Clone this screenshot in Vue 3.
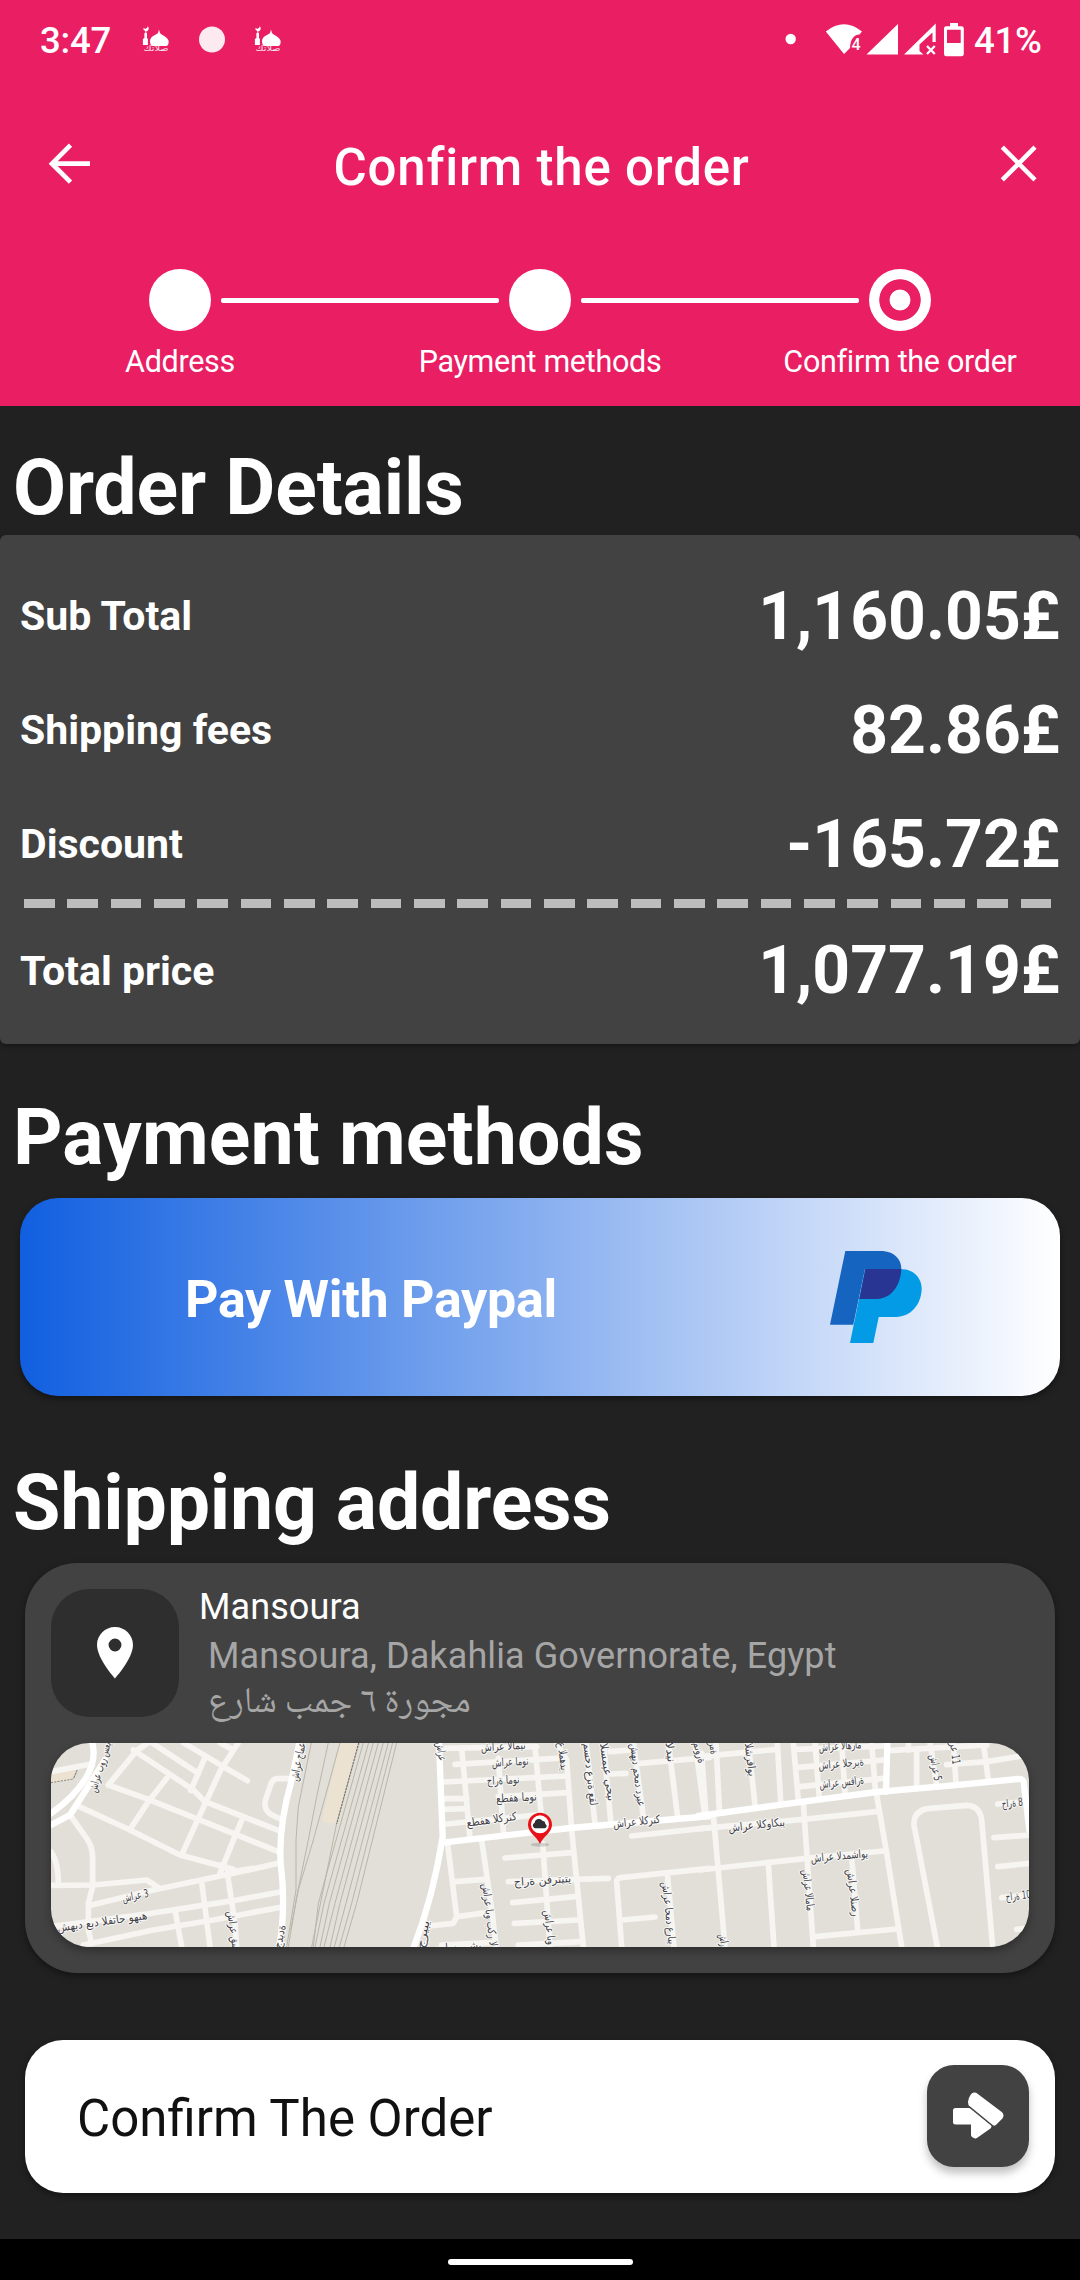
<script setup>
const steps = ['Address', 'Payment methods', 'Confirm the order']

const rows = [
  { label: 'Sub Total', value: '1,160.05£' },
  { label: 'Shipping fees', value: '82.86£' },
  { label: 'Discount', value: '-165.72£' },
]

// Map sectors share a local grid of 3 units per pixel; dx is the sector's offset in pixels.
const sectors = [
  {
    name: 'west',
    dx: -31,
    minor: [
      'M93 125 L210 103', 'M265 165 L350 62 L385 38', 'M340 60 L520 180 L555 215 L785 305',
      'M395 38 L535 130', 'M490 38 L610 110 L682 152', 'M600 38 L640 60',
      'M555 82 L512 182', 'M655 38 L602 120 L535 265 L485 375', 'M265 165 L385 208 L535 268 L775 365',
      'M440 145 L385 215 L330 298', 'M178 230 L330 300 L480 375 L640 418', 'M668 265 L645 318 L600 430',
      'M812 146 H775 Q755 146 750 170 L735 215 Q732 240 755 255 L785 268',
      'M150 255 L200 325 Q218 350 218 385 V470 L205 520 V600 L215 640', 'M93 365 Q115 395 115 465',
      'M93 466 L220 465 L380 450 L415 472', 'M215 525 L400 480 L640 430 L775 400', 'M600 405 L640 425 L700 415',
      'M93 590 L380 552 L640 512 L785 485', 'M190 645 L400 600 L580 570 L790 530',
      'M545 455 L570 651', 'M622 430 L645 580 L650 651', 'M465 540 L485 651',
    ],
    major: [
      'M217 38 Q230 90 200 140 Q165 200 93 250', 'M255 90 L150 255 L93 285',
      'M838 38 L815 150 Q775 290 782 400 Q795 500 785 600 L778 651',
    ],
    labels: [
      { t: 'شارع بور سعيد', x: 252, y: 110, r: -73, l: 165 },
      { t: 'شارع جامعة', x: 846, y: 92, r: -78, l: 130 },
      { t: 'شارع 3', x: 348, y: 508, r: -11, l: 80 },
      { t: 'شهيد عبد الفتاح وهبه', x: 248, y: 586, r: -8, l: 272 },
      { t: 'شارع قس', x: 630, y: 604, r: 82, l: 118 },
      { t: 'جديدة', x: 790, y: 622, r: -78, l: 70 },
    ],
  },
  {
    name: 'center',
    dx: 319,
    minor: [
      'M220 55 L500 50', 'M255 103 L560 85', 'M218 156 L590 138', 'M222 206 L290 206', 'M225 238 L290 236',
      'M228 282 L500 255', 'M385 200 L595 188', 'M275 55 L300 325', 'M385 85 L400 305', 'M495 50 L515 270',
      'M560 38 L590 90 L605 300 L640 651', 'M648 38 L675 280', 'M700 38 L722 270', 'M790 38 L820 260',
      'M895 38 L922 255', 'M975 38 L1003 245', 'M720 65 L785 60', 'M725 132 L768 130', 'M810 100 L1020 82',
      'M785 318 L1020 293', 'M232 335 L260 560 L250 580 L175 588', 'M255 455 L345 448', 'M262 560 L350 548',
      'M335 330 L368 560 L378 651', 'M518 340 L540 651', 'M405 384 L605 368', 'M415 455 L715 445',
      'M428 518 L615 500', 'M433 580 L625 570', 'M445 645 L635 635', 'M755 651 L740 455 Q740 442 760 442 L1020 415',
      'M755 570 L855 561', 'M892 430 L912 651', 'M215 645 L360 638',
    ],
    major: ['M207 38 L218 320 Q190 500 130 655', 'M218 338 L600 294 L1025 258'],
    labels: [
      { t: 'شارع', x: 203, y: 66, r: 82, l: 56 },
      { t: 'شارع الامين', x: 400, y: 60, r: -3, l: 134 },
      { t: 'شارع امون', x: 421, y: 107, r: -3, l: 110 },
      { t: 'حارة امون', x: 400, y: 162, r: -3, l: 98 },
      { t: 'عطفه امون', x: 440, y: 214, r: -3, l: 122 },
      { t: 'عطفه الكرنك', x: 366, y: 280, r: -8, l: 152 },
      { t: 'شارع الكرنك', x: 801, y: 286, r: -6, l: 142 },
      { t: 'حارة نفرتيتي', x: 518, y: 462, r: -4, l: 172 },
      { t: 'ع المهدي', x: 568, y: 80, r: 83, l: 84 },
      { t: 'مسجد عزبة عقل', x: 650, y: 134, r: 84, l: 188 },
      { t: 'السميع يحيى', x: 702, y: 128, r: 82, l: 175 },
      { t: 'شهيد محمد دريع', x: 792, y: 136, r: 83, l: 190 },
      { t: 'الدين', x: 890, y: 68, r: 83, l: 60 },
      { t: 'منورة', x: 978, y: 70, r: 75, l: 64 },
      { t: 'شارع ابو بكر ال', x: 348, y: 556, r: 83, l: 190 },
      { t: 'شارع ابو', x: 528, y: 594, r: 83, l: 104 },
      { t: 'شارع احمد عرابي', x: 886, y: 550, r: 84, l: 188 },
      { t: 'جريبي', x: 170, y: 615, r: -78, l: 84 },
      { t: 'ن اسر رشي', x: 265, y: 662, r: -4, l: 140 },
    ],
  },
  {
    name: 'east',
    dx: 649,
    minor: [
      'M0 80 L230 58', 'M5 70 L17 245', 'M48 38 L58 240', 'M145 38 L165 225', 'M232 38 L242 215',
      'M280 38 L295 212', 'M345 38 L358 205', 'M425 38 L435 190', 'M515 38 L527 190', 'M290 58 L555 48',
      'M295 112 L550 90', 'M300 170 L550 145', 'M565 62 L860 45', 'M650 60 V175', 'M690 38 L710 165',
      'M760 38 L768 160', 'M850 38 L865 150', 'M740 104 L860 95 L985 75', 'M625 38 V60', 'M0 296 L310 268 L530 245',
      'M0 420 L320 385 L550 363', 'M40 255 L75 651', 'M310 220 L340 651', 'M205 405 L222 651',
      'M530 195 L560 370 L605 651', 'M455 380 L473 600', 'M345 620 L590 597',
      'M712 651 L642 285 Q640 240 690 235 L800 226 Q840 228 845 270 L878 651',
      'M893 222 L985 215', 'M882 323 L990 315', 'M893 410 L990 400', 'M905 503 L990 495', 'M950 598 L990 594',
    ],
    major: ['M-5 258 L310 215 L530 186 L760 166 L955 147 Q972 145 972 165 L988 300', 'M562 38 L558 185'],
    labels: [
      { t: 'رمة', x: 30, y: 56, r: 80, l: 36 },
      { t: 'الشرقاوي', x: 140, y: 90, r: 83, l: 100 },
      { t: 'شارع الاهرام', x: 421, y: 59, r: -4, l: 128 },
      { t: 'شارع الحرية', x: 424, y: 112, r: -5, l: 136 },
      { t: 'شارع سقارة', x: 426, y: 168, r: -6, l: 134 },
      { t: 'شارع 5', x: 696, y: 115, r: 80, l: 80 },
      { t: 'رع 11', x: 754, y: 72, r: 83, l: 66 },
      { t: 'حارة 8', x: 938, y: 230, r: -6, l: 64 },
      { t: 'حارة 10', x: 956, y: 508, r: -7, l: 76 },
      { t: 'شارع الكواكبي', x: 171, y: 296, r: -6, l: 170 },
      { t: 'شارع الدمشاوي', x: 419, y: 389, r: -5, l: 172 },
      { t: 'شارع الامام', x: 314, y: 482, r: 84, l: 124 },
      { t: 'شارع النصر', x: 449, y: 490, r: 83, l: 142 },
      { t: 'شار', x: 60, y: 632, r: 80, l: 38 },
    ],
  },
]

const rails = [
  'M874 38 L835 230 L828 330 V480 L800 651', 'M925 38 L890 200 L865 330 L830 500 L805 651', 'M960 38 L880 330 L835 480 L812 600',
  'M1018 38 L950 280 L875 651', 'M1030 38 L895 520 L880 651', 'M1046 38 L912 520 L885 651', 'M1060 38 L928 520 L900 651',
  'M1075 38 L945 520 L912 651', 'M1090 38 L960 520 L930 651', 'M1105 38 L978 520 L943 651', 'M1118 38 L995 520 L958 651', 'M1130 38 L1010 520 L972 651',
]
</script>

<template>
  <div class="screen">
    <header class="header">
      <div class="status">
        <span class="time">3:47</span>
        <svg class="notifications" viewBox="140 0 150 80" width="150" height="80">
          <defs>
            <g id="mosque">
              <path d="M4.6 0.2 A2.7 2.7 0 1 1 0.4 1.8 A2.4 2.4 0 0 0 4.6 0.2Z M2.3 4 h1 v3 h-1z M1.4 7 h2.6 v5 l.9 1 v6 h-5 v-6 l1.500 -1z" fill="#fff" />
              <path d="M16 3.500 l.8 3 c1 2.500 7 3.500 8.700 8 c.7 3 -.8 5 -1.500 5.500 H8.500 C6.600 17 6.500 14 8 12 c2 -3 6.500 -3.500 7.200 -5.500z" fill="#fff" />
              <text x="0.500" y="24.500" textLength="25" lengthAdjust="spacingAndGlyphs" font-size="8" fill="#fff" font-family="DejaVu Sans, sans-serif" opacity=".9">صلاتك</text>
            </g>
          </defs>
          <use href="#mosque" x="143" y="25" />
          <circle cx="212" cy="38.500" r="13" fill="#fff" opacity=".9" />
          <use href="#mosque" x="255" y="25" />
        </svg>
        <svg class="indicators" viewBox="780 0 190 80" width="190" height="80">
          <g fill="#fff">
            <circle cx="790.700" cy="38" r="5.200" />
            <path d="M825.800 30.500 Q844 16 862 30.500 L859.500 33.500 Q850.500 34 850 47 L844 53Z" />
            <path d="M898 23 V53.500 H866.500Z" />
            <path fill-rule="evenodd" d="M935.700 22.500 V41 H932.500 V31.500 L919.500 43.500 V50 L923.500 53.500 H904Z" />
            <path fill-rule="evenodd" d="M950 22 h8 v3.200 h3.500 q2.300 0 2.300 2.300 V53 q0 2.200 -2.300 2.200 H946.300 q-2.300 0 -2.300 -2.200 V27.500 q0 -2.300 2.300 -2.300 H950Z M947 28.800 V42 H960.700 V28.800Z" />
          </g>
          <text x="851.500" y="48.500" font-size="16" font-weight="500" fill="#fff" font-family="Roboto, sans-serif">4</text>
          <path d="M927 45 L934.800 53 M934.800 45 L927 53" stroke="#fff" stroke-width="2.300" />
        </svg>
        <span class="battery">41%</span>
      </div>

      <div class="appbar">
        <svg viewBox="40 140 58 48" width="58" height="48">
          <path d="M90 163.700 H52 M70.500 145.200 L52 163.700 L70.500 182.200" fill="none" stroke="#fff" stroke-width="4.700" />
        </svg>
        <h1>Confirm the order</h1>
        <svg viewBox="992 140 52 48" width="52" height="48">
          <path d="M1002.300 147.200 L1035 179.900 M1035 147.200 L1002.300 179.900" stroke="#fff" stroke-width="4.500" />
        </svg>
      </div>

      <div class="track">
        <i class="node"></i><i class="line"></i><i class="node"></i><i class="line"></i><i class="node current"></i>
      </div>
      <div class="steps">
        <span v-for="s in steps" :key="s">{{ s }}</span>
      </div>
    </header>

    <main>
      <h2 class="details">Order Details</h2>
      <section class="summary">
        <div v-for="r in rows" :key="r.label" class="row">
          <span class="label">{{ r.label }}</span><span class="value">{{ r.value }}</span>
        </div>
        <div class="dashes"></div>
        <div class="row total">
          <span class="label">Total price</span><span class="value">1,077.19£</span>
        </div>
      </section>

      <h2 class="payment">Payment methods</h2>
      <button class="paypal">
        <span>Pay With Paypal</span>
        <svg viewBox="0 0 92 92" width="92" height="92">
          <path d="M15.300 0 H53 C65 1 72 9 71.300 19 L35 18 L23.300 73.700 H0Z" fill="#1565c0" />
          <path d="M35 18.300 H73 C84 19 91.700 27 91.700 38 C91 54 81 65.500 66 66 H48.700 L43.300 92 H20Z" fill="#039be5" />
          <path d="M35.300 18 H71.300 C70.500 35 61 47.500 47 48 H29.300Z" fill="#283593" />
        </svg>
      </button>

      <h2 class="ship">Shipping address</h2>
      <section class="address">
        <div class="place">
          <div class="pin">
            <svg viewBox="5 2 14 20" width="36" height="51.400">
              <path fill="#fff" d="M12 2C8.130 2 5 5.130 5 9c0 5.250 7 13 7 13s7-7.750 7-13c0-3.870-3.130-7-7-7zm0 9.500a2.500 2.500 0 1 1 0-5 2.500 2.500 0 0 1 0 5z" />
            </svg>
          </div>
          <div class="lines">
            <span class="city">Mansoura</span>
            <span class="region">Mansoura, Dakahlia Governorate, Egypt</span>
            <span class="street"><bdi dir="rtl">مجورة ٦ جمب شارع</bdi></span>
          </div>
        </div>
        <svg class="map" viewBox="0 0 978 204" width="978" height="204">
          <rect width="978" height="204" fill="#e1dfd7" />
          <g transform="translate(-31 -13) scale(.33333)" fill="none">
            <path d="M960 38 H1015 L950 282 L905 275Z" fill="#ebe2d1" />
            <path d="M93 133 L170 117 L160 147 L93 158Z" fill="#ebe2d1" />
            <path d="M93 158 L160 147 L172 117 M162 142 l10 -20" stroke="#77716a" stroke-width="2.500" stroke-dasharray="6 4" />
            <path v-for="d in rails" :key="d" :d="d" stroke="#b9b5aa" stroke-width="3" />
            <path d="M1016 38 L950 282" stroke="#6e6a63" stroke-width="3" stroke-dasharray="7 3" />
          </g>
          <g v-for="s in sectors" :key="s.name" :transform="`translate(${s.dx} -13) scale(.33333)`" fill="none" stroke-linejoin="round" stroke-linecap="round">
            <path v-for="d in s.minor" :key="d" :d="d" stroke="#f6f5f2" stroke-width="17" />
            <path v-for="d in s.major" :key="d" :d="d" stroke="#fff" stroke-width="19" />
          </g>
          <g v-for="s in sectors" :key="s.name + '-labels'" :transform="`translate(${s.dx} -13) scale(.33333)`">
            <text
              v-for="(l, i) in s.labels" :key="i" class="street-name" :textLength="l.l" lengthAdjust="spacingAndGlyphs"
              :transform="`translate(${l.x} ${l.y}) rotate(${l.r})`"
            >{{ l.t }}</text>
          </g>
          <g transform="translate(319 -13) scale(.33333)">
            <ellipse cx="510" cy="344" rx="28" ry="6" fill="#000" opacity=".15" />
            <path d="M510 342 C500 318 474 308 474 284 A36 36 0 0 1 546 284 C546 308 520 318 510 342Z" fill="#e80f17" />
            <circle cx="510" cy="283" r="27" fill="#fff" />
            <path d="M495 295 a9 9 0 0 1 -1 -17 a13 13 0 0 1 24 -5 q8 0 8 9 a7 7 0 0 1 -1 13Z" fill="#2e2e33" />
          </g>
        </svg>
      </section>

      <button class="confirm">
        <span>Confirm The Order</span>
        <i class="go">
          <svg viewBox="0 0 102 102" width="102" height="102">
            <g fill="#fff" stroke="#fff" stroke-linejoin="round">
              <path d="M47.500 32 L72 50.500 L66.500 56 L47 40.500 Q44 37 47.500 32Z" stroke-width="9" />
              <path d="M28.500 45.500 H42 L62 61.500 L48.500 71 L46.500 70 V57 H28.500Z" stroke-width="5" />
            </g>
            <path d="M42 41.500 L67 62" stroke="#424242" stroke-width="1.600" />
          </svg>
        </i>
      </button>
    </main>

    <footer class="nav"><i></i></footer>
  </div>
</template>

<style>
body { margin: 0; background: #212121; }
</style>

<style scoped>
* { box-sizing: border-box; }
.screen { width: 1080px; height: 2280px; display: flex; flex-direction: column; overflow: hidden; background: #212121; color: #fff; font-family: Roboto, "DejaVu Sans", sans-serif; }
h1, h2 { margin: 0; }
svg { display: block; flex: none; }
button { border: 0; font-family: inherit; text-align: left; }

.header { height: 406px; background: #ea1e63; }
.status { height: 81px; display: flex; align-items: center; padding: 0 37px 0 40px; font-size: 36.500px; font-weight: 500; line-height: 80px; }
.time { width: 100px; letter-spacing: -.2px; }
.indicators { margin-left: auto; }
.battery { width: 69px; margin-left: 4px; letter-spacing: -.3px; white-space: nowrap; }
.appbar { height: 171px; display: flex; align-items: center; justify-content: space-between; padding: 0 36px 0 40px; }
.appbar svg { margin-bottom: 5px; }
.appbar h1 { font-size: 51px; font-weight: 500; letter-spacing: .8px; white-space: nowrap; padding: 1px 7px 0 0; }
.track { display: flex; align-items: center; padding: 0 149px; margin-top: 17px; height: 62px; }
.node { width: 62px; height: 62px; border-radius: 50%; background: #fff; flex: none; }
.node.current { background: radial-gradient(circle, #fff 10px, #ea1e63 10.800px, #ea1e63 20.300px, #fff 21.100px); }
.line { flex: 1; height: 5px; margin: 0 10px; border-radius: 2px; background: #fff; }
.steps { display: grid; grid-template-columns: repeat(3, 360px); text-align: center; font-size: 30.500px; line-height: 40px; margin-top: 11px; letter-spacing: -.3px; }

main { flex: 1; display: flex; flex-direction: column; }
h2 { font-size: 77px; line-height: 95px; font-weight: 700; margin-left: 13px; white-space: nowrap; }
h2.details { margin-top: 35px; letter-spacing: -.1px; }
h2.payment { margin-top: 47px; letter-spacing: .1px; }
h2.ship { margin-top: 60px; letter-spacing: -.15px; }
.summary { height: 509px; margin-top: -1px; padding: 24px 20px 0; border-radius: 6px; background: #424242; box-shadow: 0 2px 5px rgba(0, 0, 0, .35); }
.row { height: 114px; display: flex; align-items: center; justify-content: space-between; font-weight: 700; }
.row.total { height: 125px; }
.label { font-size: 41px; }
.value { font-size: 66px; }
.dashes { height: 9px; width: 1028px; margin: -2px 0 0 4px; background: repeating-linear-gradient(90deg, #bdbdbd 0 30.800px, transparent 30.800px 43.330px); }

.paypal { height: 198px; margin: 12px 20px 0; padding: 0 138px 0 165px; display: flex; align-items: center; justify-content: space-between; border-radius: 38px; background: linear-gradient(90deg, #115fe0, #fff); color: #fff; font-size: 52px; font-weight: 700; letter-spacing: -.3px; box-shadow: 0 3px 6px rgba(0, 0, 0, .4); }
.paypal span { padding-top: 5px; }

.address { height: 410px; margin: 12px 25px 0; padding: 26px; border-radius: 52px; background: #424242; box-shadow: 0 3px 7px rgba(0, 0, 0, .4); }
.place { display: flex; height: 154px; }
.pin { width: 128px; height: 128px; border-radius: 38px; background: #2e2e2e; display: flex; align-items: center; justify-content: center; }
.lines { display: flex; flex-direction: column; padding-left: 20px; font-size: 36px; letter-spacing: .1px; white-space: nowrap; }
.city { line-height: 36px; }
.region { line-height: 62px; padding-left: 9px; color: #a6a6a6; }
.street { line-height: 34px; padding-left: 9px; color: #a6a6a6; font-size: 36.200px; letter-spacing: 0; font-family: "Noto Naskh Arabic", "Noto Sans Arabic", "DejaVu Sans", sans-serif; }
.map { border-radius: 38px; box-shadow: 0 4px 9px rgba(0, 0, 0, .3); }
.street-name { font-family: "DejaVu Sans", sans-serif; font-size: 34px; fill: #3f3f49; text-anchor: middle; direction: ltr; unicode-bidi: bidi-override; stroke: #fbfaf8; stroke-width: 6px; paint-order: stroke; stroke-linejoin: round; }

.confirm { height: 153px; margin: 67px 25px 0; padding: 0 26px 0 52px; display: flex; align-items: center; justify-content: space-between; border-radius: 38px; background: #fff; color: #111; font-size: 51px; box-shadow: 0 3px 6px rgba(0, 0, 0, .4); }
.confirm span { padding-top: 4px; }
.go { width: 102px; height: 102px; margin-bottom: 1px; border-radius: 27px; background: #424242; box-shadow: 0 6px 9px rgba(0, 0, 0, .25); }

.nav { height: 41px; background: #000; display: flex; justify-content: center; padding-top: 20px; }
.nav i { width: 185px; height: 6px; border-radius: 3px; background: #fff; }
</style>
